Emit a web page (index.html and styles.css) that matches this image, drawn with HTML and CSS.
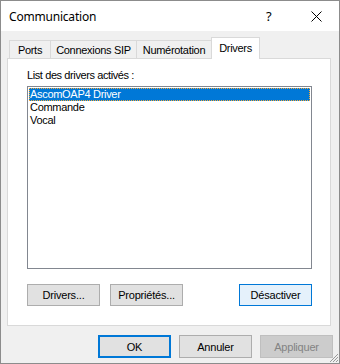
FILE: index.html
```html
<!DOCTYPE html>
<html lang="fr">

<head>
    <meta charset="UTF-8">
    <meta name="viewport" content="width=device-width, initial-scale=1.0">
    <title>Communication</title>
    <link rel="stylesheet" href="styles.css">
</head>

<body>

    <div class="window">
        <div class="titlebar">
            <span class="title">Communication</span>
            <span class="title-help">?</span>
            <span class="title-close">
                <svg width="11" height="11" viewBox="0 0 11 11">
                    <path d="M0.5 0.5 L10.5 10.5 M10.5 0.5 L0.5 10.5" stroke="#000" stroke-width="1" fill="none"/>
                </svg>
            </span>
        </div>

        <div class="content">
            <div class="tabs">
                <div class="tab tab-ports">Ports</div>
                <div class="tab tab-sip">Connexions SIP</div>
                <div class="tab tab-num">Numérotation</div>
                <div class="tab tab-drivers active">Drivers</div>
            </div>

            <div class="panel">
                <div class="list-label">List des drivers activés :</div>
                <div class="listbox">
                    <div class="list-item selected">AscomOAP4 Driver</div>
                    <div class="list-item">Commande</div>
                    <div class="list-item">Vocal</div>
                </div>
                <div class="panel-buttons">
                    <button type="button" class="btn">Drivers...</button>
                    <button type="button" class="btn">Propriétés...</button>
                    <span class="spacer"></span>
                    <button type="button" class="btn btn-hover">Désactiver</button>
                </div>
            </div>
        </div>

        <div class="footer">
            <button type="button" class="btn btn-big btn-default">OK</button>
            <button type="button" class="btn btn-big">Annuler</button>
            <button type="button" class="btn btn-big" disabled>Appliquer</button>
        </div>

        <svg class="grip" width="11" height="11" viewBox="0 0 11 11">
            <path d="M10 2 L2 10 M10 5 L5 10 M10 8 L8 10" stroke="#9a9a9a" stroke-width="1" fill="none"/>
        </svg>
    </div>

</body>

</html>
```

FILE: styles.css
```css
body {
    margin: 0;
    font-family: 'Liberation Sans', Arial, sans-serif;
    font-size: 11px;
    letter-spacing: -0.3px;
    color: #000;
}

.window {
    position: relative;
    width: 340px;
    height: 364px;
    box-sizing: border-box;
    border: 1px solid #8c8c8c;
    background: #f0f0f0;
    display: flex;
    flex-direction: column;
}

.titlebar {
    height: 30px;
    background: #fff;
    display: flex;
    align-items: center;
    font-family: 'Noto Sans', 'Open Sans', sans-serif;
    font-size: 12px;
    letter-spacing: -0.2px;
}

.title {
    flex: 1;
    padding-left: 8px;
}

.title-help {
    width: 10px;
    margin-right: 35px;
    font-size: 13px;
}

.title-close {
    width: 11px;
    height: 11px;
    margin-right: 17px;
    display: flex;
}

.content {
    padding: 6px 8px 0 6px;
}

.tabs {
    display: flex;
    align-items: flex-end;
    height: 21px;
    padding-left: 2px;
}

.tab {
    box-sizing: border-box;
    height: 18px;
    border: 1px solid #d9d9d9;
    border-bottom: none;
    margin-right: -1px;
    padding-top: 3px;
    text-align: center;
    background: #f0f0f0;
}

.tab-ports { width: 42px; }
.tab-sip { width: 87px; }
.tab-num { width: 76px; }

.tab.active {
    position: relative;
    width: 49px;
    height: 22px;
    margin-bottom: -1px;
    padding-top: 4px;
    background: #fff;
    z-index: 1;
}

.panel {
    height: 268px;
    box-sizing: border-box;
    border: 1px solid #d9d9d9;
    background: #fff;
    padding: 10px 18px 0 19px;
}

.list-label {
    height: 13px;
    line-height: 13px;
    margin-bottom: 4px;
    letter-spacing: -0.4px;
}

.listbox {
    height: 183px;
    box-sizing: border-box;
    border: 1px solid #828790;
    padding: 1px;
}

.list-item {
    height: 13px;
    line-height: 13px;
    padding-left: 1px;
}

.list-item.selected {
    background: #0078d7;
    color: #fff;
    outline: 1px dotted #f7a836;
    outline-offset: -1px;
}

.panel-buttons {
    display: flex;
    margin-top: 15px;
}

.btn {
    box-sizing: border-box;
    width: 73px;
    height: 22px;
    margin: 0 10px 0 0;
    padding: 0;
    border: 1px solid #adadad;
    background: #e1e1e1;
    font-family: 'Liberation Sans', Arial, sans-serif;
    font-size: 11px;
    letter-spacing: -0.2px;
    color: #000;
}

.spacer {
    flex: 1;
}

.panel-buttons .btn-hover {
    margin-right: 0;
    border-color: #0078d7;
    background: #e5f1fb;
}

.footer {
    display: flex;
    justify-content: flex-end;
    padding: 9px 6px 0 0;
}

.btn-big {
    height: 23px;
    margin: 0 0 0 8px;
}

.btn-default {
    border: 2px solid #0078d7;
}

.btn:disabled {
    border-color: #bfbfbf;
    background: #cccccc;
    color: #838383;
}

.grip {
    position: absolute;
    right: 0;
    bottom: 0;
}
```
